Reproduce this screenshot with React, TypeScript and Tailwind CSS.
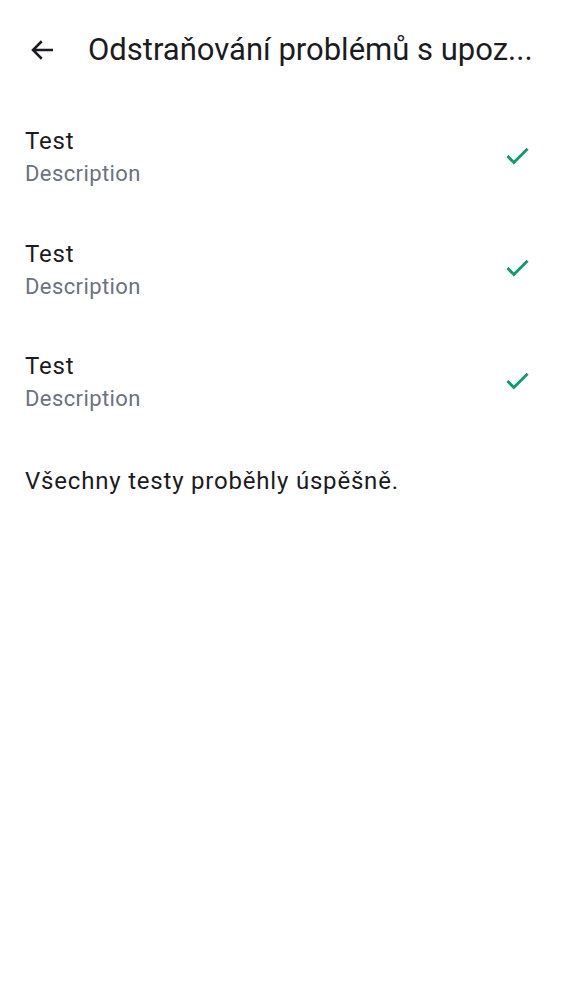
import React from 'react';

const tests = [
  { title: 'Test', description: 'Description' },
  { title: 'Test', description: 'Description' },
  { title: 'Test', description: 'Description' },
];

function CheckIcon() {
  return (
    <svg className="w-[29px] h-[29px] text-[#0e9b74]" viewBox="0 0 24 24" fill="none" stroke="currentColor">
      <path strokeWidth={2.4} strokeLinecap="square" d="M4.5 12.5l4.5 4.5L19.5 6.5" />
    </svg>
  );
}

export default function App() {
  return (
    <div className="min-h-screen bg-white font-['Roboto',sans-serif] text-[#1c1b1f]">
      <div className="flex items-center h-[100px] pl-[28px] pr-[20px]">
        <svg className="w-[30px] h-[30px] shrink-0" viewBox="0 0 24 24" fill="none" stroke="currentColor">
          <path strokeWidth={2} d="M20 12H4.5M11 5l-7 7 7 7" />
        </svg>
        <h1 className="ml-[30px] text-[31px] leading-[40px] whitespace-nowrap">Odstraňování problémů s upoz...</h1>
      </div>

      <div className="flex flex-col">
        {tests.map((t, i) => (
          <div key={i} className="flex items-center justify-between h-[112.5px] pl-[25px] pr-[30px]">
            <div className="flex flex-col pt-[4px]">
              <span className="text-[24px] leading-[30px] tracking-[0.8px]">{t.title}</span>
              <span className="mt-[2px] text-[22px] leading-[32px] tracking-[0.4px] text-[#6b7280]">{t.description}</span>
            </div>
            <CheckIcon />
          </div>
        ))}
      </div>

      <p className="px-[25px] pt-[25px] text-[24px] tracking-[0.8px]">Všechny testy proběhly úspěšně.</p>
    </div>
  );
}
